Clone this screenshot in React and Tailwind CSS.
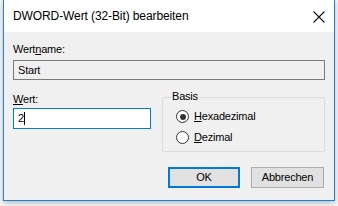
import React from "react";

function Radio({ checked }) {
  return (
    <span className="relative inline-block w-[13px] h-[13px] rounded-full border border-[#333333] bg-white shrink-0">
      {checked && (
        <span className="absolute left-[2.5px] top-[2.5px] w-[6px] h-[6px] rounded-full bg-[#333333]" />
      )}
    </span>
  );
}

export default function App() {
  return (
    <div className="w-[338px] h-[206px] bg-[#f7f7f7] overflow-hidden relative" style={{ fontFamily: '"Liberation Sans", Arial, sans-serif' }}>
      <div className="ml-[3px] w-[332px] h-[201px] border border-t-0 border-[#1883d7] bg-[#f0f0f0] flex flex-col shadow-[0_2px_6px_rgba(0,0,0,0.25)]">
        {/* Title bar */}
        <div className="h-[32px] bg-white flex items-center justify-between pl-[9px] pr-[8px] shrink-0">
          <span className="text-[12px] text-black tracking-[-0.1px]">DWORD-Wert (32-Bit) bearbeiten</span>
          <svg width="12" height="12" viewBox="0 0 12 12" className="mr-[1px] mt-[1px]">
            <path d="M0.5 0.5 L11.5 11.5 M11.5 0.5 L0.5 11.5" stroke="#111" strokeWidth="1.1" fill="none" />
          </svg>
        </div>
        {/* Body */}
        <div className="flex flex-col px-[9px] pt-[11px] text-[11px] text-black tracking-[-0.2px]">
          <div className="leading-[13px] h-[13px]">Wert<span className="underline">n</span>ame:</div>
          <div className="mt-[4px] h-[20px] w-[312px] border border-[#7a7a7a] bg-[#f0f0f0] flex items-center pl-[4px] leading-none">Start</div>
          <div className="flex mt-[11px]">
            <div className="flex flex-col w-[149px]">
              <div className="leading-[13px] h-[13px] mt-[2px]"><span className="underline">W</span>ert:</div>
              <div className="mt-[2px] h-[21px] w-[138px] border border-[#0078d7] bg-white flex items-center pl-[4px] leading-none">
                2<span className="inline-block w-[1px] h-[13px] bg-black ml-[0.5px]" />
              </div>
            </div>
            <div className="relative w-[163px] h-[55px] mt-[6px] border border-[#dcdcdc] rounded-[2px]">
              <span className="absolute left-[8px] -top-[8px] bg-[#f0f0f0] px-[1px] leading-[13px]">Basis</span>
              <div className="flex flex-col gap-[8px] pl-[13px] pt-[12px]">
                <div className="flex items-center gap-[5px] h-[13px]"><Radio checked /><span><span className="underline">H</span>exadezimal</span></div>
                <div className="flex items-center gap-[5px] h-[13px]"><Radio /><span><span className="underline">D</span>ezimal</span></div>
              </div>
            </div>
          </div>
          <div className="flex justify-end gap-[11px] mt-[15px] pr-[1px]">
            <button className="w-[72px] h-[21px] border-2 border-[#0078d7] bg-[#e1e1e1] flex items-center justify-center text-[11px] leading-none">OK</button>
            <button className="w-[73px] h-[21px] border border-[#adadad] bg-[#e1e1e1] flex items-center justify-center text-[11px] leading-none">Abbrechen</button>
          </div>
        </div>
      </div>
    </div>
  );
}
